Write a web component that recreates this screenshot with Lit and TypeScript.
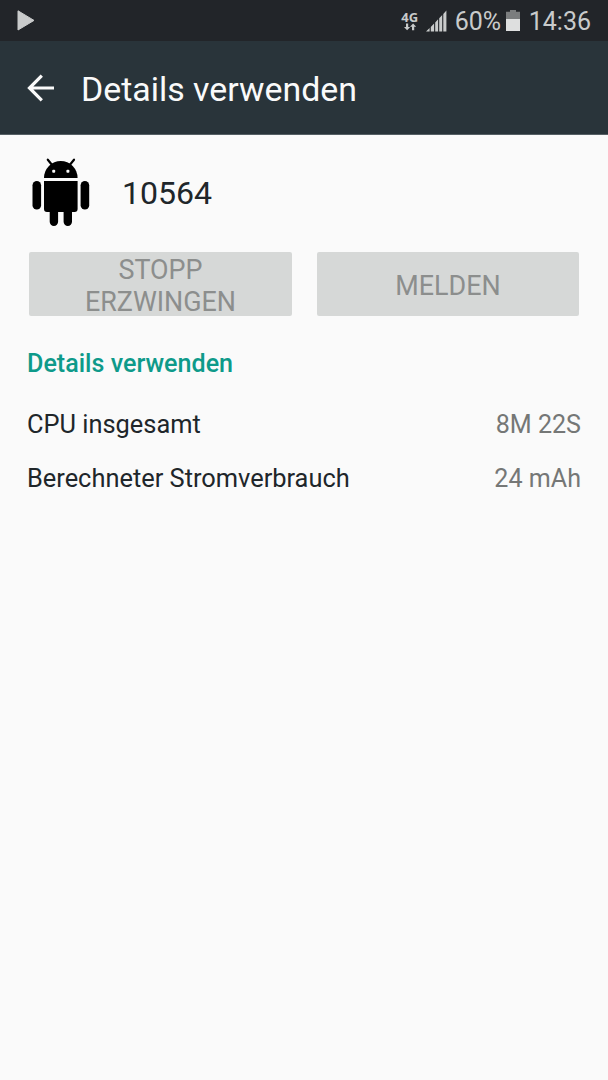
import { LitElement, html, css } from "lit";
import { customElement } from "lit/decorators.js";

const rows = [
  { label: "CPU insgesamt", value: "8M 22S" },
  { label: "Berechneter Stromverbrauch", value: "24 mAh" },
];

@customElement("status-bar")
class StatusBar extends LitElement {
  static styles = css`
    :host {
      display: flex;
      align-items: center;
      height: 41px;
      padding: 0 17px;
      box-sizing: border-box;
      background: #222529;
      color: #c9cbcb;
      font-size: 25px;
      line-height: 41px;
    }
    svg { display: block; flex: none; }
    .spacer { flex: 1; }
    .net {
      display: flex;
      flex-direction: column;
      align-items: center;
      width: 18px;
      margin-right: 7px;
      font: 700 13px/12px "Noto Sans", sans-serif;
    }
    .percent { margin-left: 8px; width: 48px; white-space: nowrap; padding-top: 1px; }
    .battery { margin-left: 3px; }
    .time { margin-left: 9px; padding-top: 1px; }
  `;
  render() {
    return html`
      <svg width="18" height="21" viewBox="0 0 18 21">
        <path d="M1 0.8 L17 10.4 L1 20 Z" fill="#c9cbcb" stroke="#c9cbcb" stroke-width="1" stroke-linejoin="round" />
      </svg>
      <div class="spacer"></div>
      <div class="net">
        <span>4G</span>
        <svg width="14" height="8" viewBox="0 0 14 8" fill="#c9cbcb">
          <path d="M3 .5h2.2V4h2L4.1 7.3 1 4h2zM9 7.3h2.2V3.8h2L10.1.5 7 3.8h2z" />
        </svg>
      </div>
      <svg width="21" height="22" viewBox="0 0 21 22" fill="#c9cbcb">
        <path d="M0 21.5L3.6 18v3.5zM4.8 17l3.3-3.5v8H4.8zM9.2 12.6l2.9-3.3v12.2H9.2zM13.2 8.3L16.2 5v16.5h-3zM17.3 4L20.4.6v20.9h-3.1z" />
      </svg>
      <span class="percent">60%</span>
      <svg class="battery" width="14" height="21" viewBox="0 0 14 21">
        <path d="M0 1.7h4V0h6v1.7h4V9H0z" fill="#7b7d7e" />
        <path d="M0 9h14v12H0z" fill="#dedfdf" />
      </svg>
      <span class="time">14:36</span>
    `;
  }
}

@customElement("app-root")
class AppRoot extends LitElement {
  static styles = css`
    :host {
      display: block;
      min-height: 1080px;
      background: #fafafa;
      color: #20262a;
      font-family: Roboto, sans-serif;
      overflow: hidden;
    }
    svg { display: block; flex: none; }
    .toolbar {
      display: flex;
      align-items: center;
      height: 94px;
      box-sizing: border-box;
      padding: 0 27px;
      background: #29343a;
      border-bottom: 1px solid #566065;
      color: #fafafa;
    }
    .title {
      margin: 0 0 0 26px;
      padding-top: 4px;
      font-size: 33.9px;
      font-weight: 400;
      line-height: 40px;
    }
    .app {
      display: flex;
      align-items: center;
      padding: 23px 32px 0;
      height: 70px;
    }
    .name { margin-left: 32px; padding-bottom: 1px; font-size: 32.1px; line-height: 40px; }
    .actions {
      display: grid;
      grid-template-columns: 263px 262px;
      gap: 25px;
      margin: 24px 29px 0;
    }
    .button {
      display: flex;
      align-items: center;
      justify-content: center;
      height: 64px;
      padding: 3px 40px 0;
      box-sizing: border-box;
      border: 0;
      border-radius: 2px;
      background: #d6d8d7;
      color: #8c8e8d;
      font: 400 26.9px/32px Roboto, sans-serif;
      text-align: center;
    }
    .heading {
      margin: 32px 27px 0;
      color: #0e9a8a;
      font-size: 25.1px;
      font-weight: 500;
      line-height: 32px;
    }
    .list { margin: 17px 27px 0; font-size: 25.4px; }
    .row { display: flex; justify-content: space-between; height: 54px; line-height: 54px; }
    .value { padding-top: 1px; color: #757776; font-size: 25.1px; }
  `;
  render() {
    return html`
      <status-bar></status-bar>
      <header class="toolbar">
        <svg width="28" height="28" viewBox="0 0 28 28" fill="none" stroke="#fafafa" stroke-width="3.2">
          <path d="M14.8 1.6L2.5 14 14.8 26.4M2.5 14H27" />
        </svg>
        <h1 class="title">Details verwenden</h1>
      </header>
      <section class="app">
        <svg width="58" height="70" viewBox="32 158 58 70">
          <path d="M44 178A16.8 17 0 0 1 77.6 178z" />
          <path d="M52.5 165.5L47.8 159.7M69.3 165.5L74 159.7" stroke="#000" stroke-width="2.2" stroke-linecap="round" />
          <path d="M44 181h33.6v28a3 3 0 0 1-3 3H72v9.8a4.2 4.2 0 0 1-8.4 0V212h-5.5v9.8a4.2 4.2 0 0 1-8.4 0V212H47a3 3 0 0 1-3-3z" />
          <rect x="32.5" y="181" width="8.6" height="28.5" rx="4.3" />
          <rect x="80.6" y="181" width="8.6" height="28.5" rx="4.3" />
          <rect x="52.2" y="169.7" width="3" height="3" rx="1" fill="#fafafa" />
          <rect x="66.4" y="169.7" width="3" height="3" rx="1" fill="#fafafa" />
        </svg>
        <div class="name">10564</div>
      </section>
      <div class="actions">
        <button class="button" disabled>STOPP ERZWINGEN</button>
        <button class="button" disabled>MELDEN</button>
      </div>
      <h2 class="heading">Details verwenden</h2>
      <div class="list">
        ${rows.map((r) => html`<div class="row"><span>${r.label}</span><span class="value">${r.value}</span></div>`)}
      </div>
    `;
  }
}
